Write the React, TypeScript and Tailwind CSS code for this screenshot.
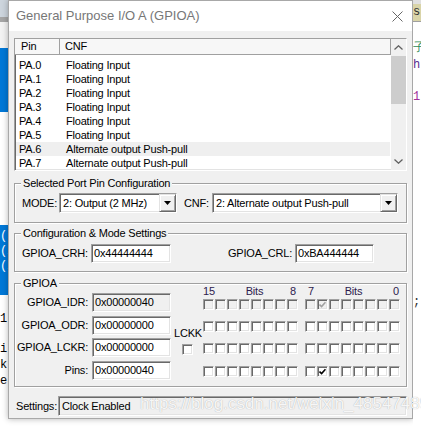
import React from "react";

const pins: [string, string][] = [
  ["PA.0", "Floating Input"],
  ["PA.1", "Floating Input"],
  ["PA.2", "Floating Input"],
  ["PA.3", "Floating Input"],
  ["PA.4", "Floating Input"],
  ["PA.5", "Floating Input"],
  ["PA.6", "Alternate output Push-pull"],
  ["PA.7", "Alternate output Push-pull"],
];

// classic win32 3D edges
const sunken =
  "border border-t-[#a0a0a0] border-l-[#a0a0a0] border-r-white border-b-white shadow-[inset_1px_1px_0_#696969,inset_-1px_-1px_0_#e3e3e3]";
const raised =
  "border border-t-[#e3e3e3] border-l-[#e3e3e3] border-r-[#696969] border-b-[#696969] shadow-[inset_1px_1px_0_#ffffff,inset_-1px_-1px_0_#a0a0a0]";
const etched = "border border-[#a0a0a0] shadow-[inset_1px_1px_0_#ffffff,1px_1px_0_#ffffff]";

function Group({ title, className, children }: { title: string; className: string; children: React.ReactNode }) {
  return (
    <div className={`relative ${etched} ${className}`}>
      <span className="absolute left-[6px] top-[-7px] bg-[#f0f0f0] px-[2px] leading-[13px] whitespace-nowrap">
        {title}
      </span>
      {children}
    </div>
  );
}

function Combo({ value, className }: { value: string; className: string }) {
  return (
    <div className={`flex h-[20px] bg-white ${sunken} ${className}`}>
      <span className="flex-1 pl-[3px] leading-[18px] whitespace-nowrap">{value}</span>
      <span className={`flex w-[17px] h-full items-center justify-center bg-[#f0f0f0] ${raised}`}>
        <svg width="7" height="4" viewBox="0 0 7 4">
          <path d="M0 0h7L3.5 4z" fill="#000" />
        </svg>
      </span>
    </div>
  );
}

function Edit({ value, className }: { value: string; className: string }) {
  return <div className={`h-[19px] pl-[2px] leading-[17px] whitespace-nowrap ${sunken} ${className}`}>{value}</div>;
}

function Box({ on, dim }: { on?: boolean; dim?: boolean }) {
  return (
    <span
      className={`flex w-[11px] h-[11px] items-center justify-center ${sunken} ${dim ? "bg-[#f0f0f0]" : "bg-white"}`}
    >
      {on && (
        <svg width="7" height="7" viewBox="0 0 7 7">
          <path d="M0.5 3.5L2.6 5.6L6.5 1.2" fill="none" stroke={dim ? "#a0a0a0" : "#000"} strokeWidth="1.6" />
        </svg>
      )}
    </span>
  );
}

function BitRow({ dim, checked, className }: { dim?: boolean; checked?: number; className: string }) {
  const bits = Array.from({ length: 16 }, (_, i) => 15 - i);
  return (
    <div className={`flex ${className}`}>
      <div className="flex gap-[1px]">
        {bits.slice(0, 8).map((b) => (
          <Box key={b} dim={dim} on={b === checked} />
        ))}
      </div>
      <div className="flex gap-[1px] ml-[7px]">
        {bits.slice(8).map((b) => (
          <Box key={b} dim={dim} on={b === checked} />
        ))}
      </div>
    </div>
  );
}

function Chevron({ up }: { up?: boolean }) {
  return (
    <svg width="9" height="5" viewBox="0 0 9 5">
      <path d={up ? "M0.5 4.5L4.5 0.8L8.5 4.5" : "M0.5 0.5L4.5 4.2L8.5 0.5"} fill="none" stroke="#606060" strokeWidth="1.3" />
    </svg>
  );
}

export default function App() {
  return (
    <div className="relative flex w-[421px] h-[427px] overflow-hidden bg-white font-['Liberation_Sans',Arial,sans-serif] text-[11px] tracking-[-0.2px] text-black">
      {/* desktop behind, left */}
      <div className="flex flex-col w-[8px] shrink-0 overflow-hidden font-['Liberation_Mono',monospace] text-[12px] tracking-normal">
        <div className="h-[17px] bg-[#cdd5dd]" />
        <div className="h-[5px] bg-[#a6a6a6]" />
        <div className="h-[26px] bg-[#f3f3f3]" />
        <div className="h-[64px] bg-[#0078d7]" />
        <div className="h-[113px] bg-white" />
        <div className="h-[70px] bg-[#0078d7] pt-[4px] leading-[15px] text-white whitespace-nowrap">
          <div>(s</div>
          <div>(i</div>
          <div>(i</div>
        </div>
        <div className="flex-1 bg-white pt-[16px] leading-[16px] whitespace-nowrap">
          <div>1</div>
          <div className="mt-[14px]">i:</div>
          <div>k</div>
          <div>e:</div>
        </div>
      </div>

      {/* dialog */}
      <div className="flex flex-col w-[405px] h-[419px] shrink-0 border border-[#a8a8a8] bg-[#f0f0f0] shadow-[0_0_6px_rgba(0,0,0,0.3)]">
        <div className="flex h-[30px] items-center justify-between bg-white pl-[7px] pr-[9px]">
          <span className="text-[13px] tracking-normal text-[#777777]">General Purpose I/O A (GPIOA)</span>
          <svg width="11" height="11" viewBox="0 0 11 11">
            <path d="M0.5 0.5L10.5 10.5M10.5 0.5L0.5 10.5" stroke="#666666" strokeWidth="1" />
          </svg>
        </div>

        <div className="flex flex-col px-[5px]">
          {/* pin list */}
          <div className={`flex mt-[7px] h-[133px] bg-white overflow-hidden ${sunken}`}>
            <div className="flex flex-col flex-1 overflow-hidden">
              <div className="flex h-[16px] shrink-0 bg-[#f7f7f7] border-b border-[#a0a0a0] leading-[15px]">
                <span className="w-[45px] pl-[6px] border-r border-[#a0a0a0]">Pin</span>
                <span className="flex-1 pl-[5px] border-r border-[#a0a0a0]">CNF</span>
              </div>
              <div className="pt-[3px]">
                {pins.map(([pin, cnf]) => (
                  <div
                    key={pin}
                    className={`flex h-[14px] mx-[1px] pl-[3px] leading-[14px] ${pin === "PA.6" ? "bg-[#efefef]" : ""}`}
                  >
                    <span className="w-[47px]">{pin}</span>
                    <span>{cnf}</span>
                  </div>
                ))}
              </div>
            </div>
            <div className="flex flex-col w-[15px] shrink-0 bg-[#f0f0f0]">
              <div className="flex h-[17px] items-center justify-center">
                <Chevron up />
              </div>
              <div className="h-[48px] bg-[#cdcdcd]" />
              <div className="flex-1" />
              <div className="flex h-[17px] items-center justify-center">
                <Chevron />
              </div>
            </div>
          </div>

          <Group title="Selected Port Pin Configuration" className="mt-[12px] h-[40px]">
            <div className="flex items-center pt-[9px] pl-[7px]">
              <span className="w-[37px]">MODE:</span>
              <Combo value="2: Output (2 MHz)" className="w-[118px]" />
              <span className="w-[28px] ml-[7px]">CNF:</span>
              <Combo value="2: Alternate output Push-pull" className="w-[186px]" />
            </div>
          </Group>

          <Group title="Configuration & Mode Settings" className="mt-[10px] h-[39px]">
            <div className="flex items-center pt-[10px] pl-[7px]">
              <span className="w-[69px]">GPIOA_CRH:</span>
              <Edit value="0x44444444" className="w-[80px] bg-white" />
              <span className="w-[67px] ml-[57px]">GPIOA_CRL:</span>
              <Edit value="0xBA444444" className="w-[79px] bg-white" />
            </div>
          </Group>

          <Group title="GPIOA" className="mt-[11px] h-[104px]">
            <div className="flex">
              <div className="flex flex-col pl-[2px] pt-[9px]">
                {[
                  ["GPIOA_IDR:", "0x00000040", "mt-0 bg-[#f0f0f0]"],
                  ["GPIOA_ODR:", "0x00000000", "mt-[4px] bg-white"],
                  ["GPIOA_LCKR:", "0x00000000", "mt-[3px] bg-white"],
                  ["Pins:", "0x00000040", "mt-[4px] bg-white"],
                ].map(([label, value, cls]) => (
                  <div key={label} className={`flex items-center ${cls.split(" ")[0]}`}>
                    <span className="w-[75px] pr-[4px] text-right whitespace-nowrap">{label}</span>
                    <Edit value={value} className={`w-[79px] ${cls.split(" ")[1]}`} />
                  </div>
                ))}
              </div>

              <div className="flex flex-col w-[32px] pt-[43px]">
                <span className="pl-[3px] leading-[13px]">LCKK</span>
                <span className="ml-[11px] mt-[4px]">
                  <Box />
                </span>
              </div>

              <div className="flex flex-col pt-[1px] text-[#2d1b4e]">
                <div className="flex h-[13px] leading-[13px]">
                  <div className="flex w-[95px] justify-between pr-[2px]">
                    <span>15</span>
                    <span className="ml-[4px]">Bits</span>
                    <span>8</span>
                  </div>
                  <div className="flex w-[95px] ml-[7px] justify-between pl-[3px] pr-[1px]">
                    <span>7</span>
                    <span>Bits</span>
                    <span>0</span>
                  </div>
                </div>
                <BitRow dim checked={6} className="mt-[1px]" />
                <BitRow className="mt-[11px]" />
                <BitRow className="mt-[11px]" />
                <BitRow checked={6} className="mt-[12px]" />
              </div>
            </div>
          </Group>

          <div className="flex items-center mt-[9px]">
            <span className="w-[44px] pl-[2px]">Settings:</span>
            <div className={`flex-1 h-[20px] pl-[3px] leading-[18px] bg-[#f0f0f0] ${sunken}`}>Clock Enabled</div>
          </div>
        </div>
      </div>

      {/* desktop behind, right */}
      <div className="flex flex-col w-[8px] shrink-0 overflow-hidden font-['Liberation_Mono',monospace] text-[12px] tracking-normal">
        <div className="h-[4px] bg-[#e0e0e0]" />
        <div className="h-[17px] bg-[#d9d4a8] leading-[17px] text-[#303030]">s</div>
        <div className="h-[1px] bg-[#a0a0a0]" />
        <div className="flex-1 bg-white pt-[18px] leading-[17px] whitespace-nowrap">
          <div className="text-[#2e8b57]">子</div>
          <div className="text-[#5a2d91]">h</div>
          <div className="mt-[15px] text-[#a0309a]">1</div>
          <div className="mt-[188px] text-[#303030]">;</div>
        </div>
      </div>

      {/* CSDN watermark over the bottom */}
      <span className="absolute left-[140px] top-[394px] text-[17px] leading-[20px] tracking-normal whitespace-nowrap text-white/90 [text-shadow:0_0_1px_rgba(0,0,0,0.35)]">
        https://blog.csdn.net/weixin_48547489
      </span>
    </div>
  );
}
